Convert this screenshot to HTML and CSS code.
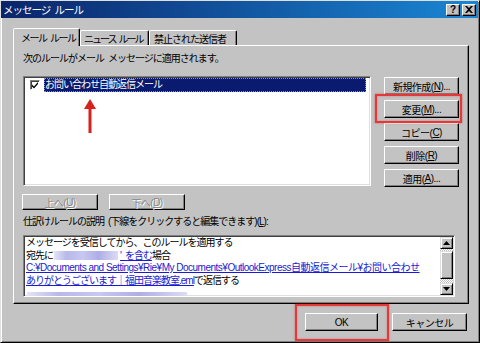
FILE: index.html
```html
<!DOCTYPE html>
<html lang="ja">
<head>
  <meta charset="UTF-8">
  <title>メッセージ ルール</title>
  <link rel="stylesheet" href="styles.css">
</head>
<body>

  <div class="window">
    <!-- title bar -->
    <div class="titlebar">
      <span class="title">メッセージ&ensp;ルール</span>
      <div class="caption-btns">
        <span class="cap-btn">?</span>
        <span class="cap-btn">
          <svg width="8" height="7" viewBox="0 0 8 7"><path d="M0 0h2l2 2 2-2h2L5 3.5 8 7H6L4 5 2 7H0l3-3.5z" fill="#000"/></svg>
        </span>
      </div>
    </div>

    <div class="client">
      <div class="tabs">
        <div class="tab active">メール&ensp;ルール</div>
        <div class="tab">ニュース&ensp;ルール</div>
        <div class="tab">禁止された送信者</div>
      </div>

      <div class="panel">
        <p class="caption">次のルールがメール&ensp;メッセージに適用されます。</p>

        <div class="rules-row">
          <div class="listbox">
            <div class="rule-item">
              <span class="check">
                <svg width="8" height="8" viewBox="0 0 8 8"><path d="M1 3.5l2 2 4-4.5v2L3 7.5 1 5.5z" fill="#000"/></svg>
              </span>
              <span class="rule-name">お問い合わせ自動返信メール</span>
            </div>
          </div>
          <div class="side-btns">
            <button class="btn">新規作成(<u>N</u>)...</button>
            <button class="btn">変更(<u>M</u>)...</button>
            <button class="btn">コピー(<u>C</u>)</button>
            <button class="btn">削除(<u>R</u>)</button>
            <button class="btn">適用(<u>A</u>)...</button>
          </div>
        </div>

        <div class="move-btns">
          <button class="btn disabled">上へ(<u>U</u>)</button>
          <button class="btn disabled">下へ(<u>D</u>)</button>
        </div>

        <p class="caption label-desc">仕訳けルールの説明&ensp;(下線をクリックすると編集できます)(<u>L</u>):</p>

        <div class="desc">
          <div class="desc-text">
            <div class="line">メッセージを受信してから、このルールを適用する</div>
            <div class="line">宛先に<span class="blur"></span><a class="link">'&ensp;を含む</a>場合</div>
            <div class="line"><a class="link path">C:¥Documents and Settings¥Rie¥My Documents¥OutlookExpress自動返信メール¥お問い合わせ</a></div>
            <div class="line"><a class="link">ありがとうございます｜福田音楽教室.eml</a>で返信する</div>
            <div class="line"><span class="blur wide"></span></div>
          </div>
          <div class="scrollbar">
            <span class="sb-btn">
              <svg width="7" height="4" viewBox="0 0 7 4"><path d="M3.5 0L7 4H0z" fill="#000"/></svg>
            </span>
            <span class="sb-thumb"></span>
            <span class="sb-track"></span>
            <span class="sb-btn">
              <svg width="7" height="4" viewBox="0 0 7 4"><path d="M0 0h7L3.5 4z" fill="#000"/></svg>
            </span>
          </div>
        </div>
      </div>

      <div class="footer">
        <button class="btn btn-ok">OK</button>
        <button class="btn btn-cancel">キャンセル</button>
      </div>
    </div>

    <!-- red annotations drawn over the dialog -->
    <div class="mark mark-edit"></div>
    <div class="mark mark-ok"></div>
    <svg class="arrow" width="14" height="34" viewBox="0 0 14 34">
      <path d="M7 0L13 10H8.5V34H5.5V10H1z" fill="#d8201e"/>
    </svg>
  </div>

</body>
</html>
```

FILE: styles.css
```css
body {
  margin: 0;
  background-color: #c0c0c0;
  font-family: "Liberation Sans", "Noto Sans CJK JP", sans-serif;
  font-size: 10px;
  color: #000;
}
.window {
  position: relative;
  width: 480px;
  height: 343px;
  box-sizing: border-box;
  background-color: #c3c3c3;
  border: 1px solid;
  border-color: #e0e0e0 #000 #000 #e0e0e0;
  box-shadow: inset 1px 1px #fff, inset -1px -1px #808080;
  overflow: hidden;
}
.titlebar {
  height: 17px;
  margin: 0 1px 0 0;
  padding: 0 2px 0 2px;
  display: flex;
  align-items: center;
  justify-content: space-between;
  background: linear-gradient(to right, #0a246a, #1a86d4);
}
.title {
  color: #fff;
  font-size: 10.5px;
  letter-spacing: -1px;
}
.caption-btns {
  display: flex;
  gap: 2px;
}
.cap-btn {
  width: 14px;
  height: 12px;
  box-sizing: border-box;
  display: flex;
  align-items: center;
  justify-content: center;
  background-color: #c0c0c0;
  border: 1px solid;
  border-color: #fff #000 #000 #fff;
  box-shadow: inset -1px -1px #808080;
  font-weight: bold;
  font-size: 10px;
  line-height: 10px;
}

.client {
  padding: 10px 10px 0 12px;
}

/* tabs */
.tabs {
  display: flex;
  align-items: flex-end;
  height: 17px;
  position: relative;
  z-index: 1;
}
.tab {
  height: 15px;
  box-sizing: border-box;
  padding: 0 0 0 4px;
  display: flex;
  align-items: center;
  border: 1px solid;
  border-bottom: none;
  border-color: #fff #000 transparent #fff;
  box-shadow: inset -1px 0 #808080;
  border-radius: 2px 2px 0 0;
  letter-spacing: -1.5px;
  white-space: nowrap;
  overflow: hidden;
}
.tab.active {
  height: 18px;
  margin-bottom: -1px;
  width: 67px;
  padding-left: 7px;
  background-color: #c3c3c3;
}
.tab:nth-child(2) {
  width: 69px;
  padding-left: 3px;
  letter-spacing: -2px;
}
.tab:nth-child(3) {
  width: 88px;
  letter-spacing: -1px;
}

.panel {
  height: 259px;
  box-sizing: border-box;
  padding: 6px 9px 0 9px;
  border: 1px solid;
  border-color: #fff #000 #000 #fff;
  box-shadow: inset -1px -1px #808080;
}
.caption {
  margin: 0;
  height: 13px;
  line-height: 13px;
  letter-spacing: -1px;
  white-space: nowrap;
}

.rules-row {
  display: flex;
  gap: 13px;
  margin-top: 11px;
}
.listbox {
  flex: 1;
  height: 110px;
  box-sizing: border-box;
  padding: 1px 4px;
  background-color: #fff;
  border: 1px solid;
  border-color: #808080 #fff #fff #808080;
  box-shadow: inset 1px 1px #404040, inset -1px -1px #dfdfdf;
}
.rule-item {
  display: flex;
  align-items: center;
  gap: 4px;
  height: 14px;
  padding-left: 2px;
}
.check {
  width: 10px;
  height: 10px;
  box-sizing: border-box;
  display: flex;
  align-items: center;
  justify-content: center;
  border: 1px solid;
  border-color: #808080 #fff #fff #808080;
  box-shadow: inset 1px 1px #404040;
  background-color: #fff;
}
.rule-name {
  flex: 1;
  height: 14px;
  line-height: 13px;
  box-sizing: border-box;
  padding-left: 1px;
  background-color: #0a1a6e;
  color: #fff;
  outline: 1px dotted #8c8cc8;
  outline-offset: -1px;
  letter-spacing: -1px;
}

.side-btns {
  width: 75px;
  display: flex;
  flex-direction: column;
  gap: 5px;
  padding-top: 1px;
}
.btn {
  height: 18px;
  box-sizing: border-box;
  padding: 0;
  display: flex;
  align-items: center;
  justify-content: center;
  background-color: #c3c3c3;
  border: 1px solid;
  border-color: #fff #000 #000 #fff;
  box-shadow: inset -1px -1px #808080;
  font-family: inherit;
  font-size: 10px;
  letter-spacing: -0.5px;
  color: #000;
  white-space: nowrap;
}
.btn.disabled {
  color: #8a8a8a;
  text-shadow: 1px 1px #fff;
}

.move-btns {
  display: flex;
  gap: 11px;
  margin-top: 7px;
  margin-left: -1px;
}
.move-btns .btn {
  width: 76px;
  height: 16px;
}
.label-desc {
  margin-top: 5px;
}

.desc {
  display: flex;
  width: 432px;
  height: 62px;
  margin-top: 7px;
  box-sizing: border-box;
  background-color: #fff;
  border: 1px solid;
  border-color: #808080 #fff #fff #808080;
  box-shadow: inset 1px 1px #404040, inset -1px -1px #dfdfdf;
  overflow: hidden;
}
.desc-text {
  flex: 1;
  padding: 1px 0 0 2px;
  overflow: hidden;
}
.line {
  height: 12.5px;
  line-height: 12.5px;
  white-space: nowrap;
  letter-spacing: -1px;
}
.link {
  color: #1a1ad0;
  text-decoration: underline;
}
.path {
  letter-spacing: -0.5px;
}
.blur {
  display: inline-block;
  width: 64px;
  height: 9px;
  margin: 0 2px 0 1px;
  vertical-align: -1px;
  background: linear-gradient(to right, #e4e4f6, #b8b8ea 20%, #c8c8f2 45%, #aeaee6 70%, #dcdcf4);
}
.blur.wide {
  width: 160px;
  margin-top: 5px;
}

.scrollbar {
  width: 13px;
  margin: 1px 1px 1px 0;
  display: flex;
  flex-direction: column;
  background: repeating-conic-gradient(#c0c0c0 0 25%, #fff 0 50%) 0 0 / 2px 2px;
}
.sb-btn, .sb-thumb {
  box-sizing: border-box;
  display: flex;
  align-items: center;
  justify-content: center;
  background-color: #c3c3c3;
  border: 1px solid;
  border-color: #dfdfdf #000 #000 #dfdfdf;
  box-shadow: inset 1px 1px #fff, inset -1px -1px #808080;
}
.sb-btn {
  height: 12px;
}
.sb-thumb {
  height: 28px;
  margin-top: 2px;
}
.sb-track {
  flex: 1;
}

.footer {
  display: flex;
  justify-content: flex-end;
  gap: 14px;
  margin-top: 9px;
  padding-right: 2px;
}
.btn-ok {
  width: 73px;
}
.btn-cancel {
  width: 75px;
}

/* annotations */
.mark {
  position: absolute;
  border: 2px solid #e23a3a;
  box-shadow: 0 0 2px rgba(230, 40, 40, 0.6), inset 0 0 2px rgba(230, 40, 40, 0.5);
}
.mark-edit {
  left: 374px;
  top: 93px;
  width: 83px;
  height: 25px;
}
.mark-ok {
  left: 294px;
  top: 303px;
  width: 90px;
  height: 33px;
}
.arrow {
  position: absolute;
  left: 82px;
  top: 98px;
}
```
